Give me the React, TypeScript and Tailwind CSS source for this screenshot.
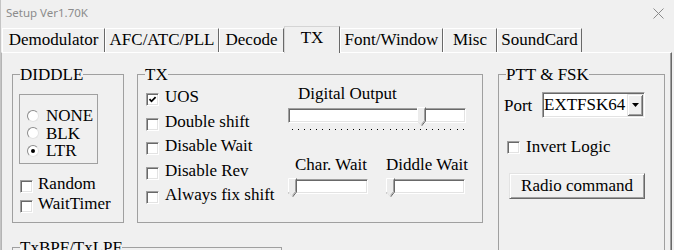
import React from 'react';

const CheckBox: React.FC<{ checked?: boolean; className?: string }> = ({ checked, className }) => (
  <span
    className={`relative block h-[13px] w-[13px] shrink-0 border border-b-white border-l-[#a0a0a0] border-r-white border-t-[#a0a0a0] bg-white shadow-[inset_1px_1px_0_#696969,inset_-1px_-1px_0_#e3e3e3] ${className ?? ''}`}
  >
    {checked && (
      <svg className="absolute left-[1px] top-[1px]" width="9" height="9" viewBox="0 0 9 9">
        <path d="M1.5 4.2 L3.5 6.3 L7.6 2.2" fill="none" stroke="#000" strokeWidth="1.8" />
      </svg>
    )}
  </span>
);

const Radio: React.FC<{ checked?: boolean }> = ({ checked }) => (
  <span className="flex h-[12px] w-[12px] shrink-0 items-center justify-center rounded-full border border-b-[#e3e3e3] border-l-[#8c8c8c] border-r-[#e3e3e3] border-t-[#8c8c8c] bg-white">
    {checked && <span className="block h-[4px] w-[4px] rounded-full bg-black" />}
  </span>
);

const Thumb: React.FC<{ className: string }> = ({ className }) => (
  <svg className={`absolute ${className}`} width="9" height="20" viewBox="0 0 9 20">
    <path d="M0.5 14 V0.5 H8.5 V14 L4.5 19 Z" fill="#ececec" />
    <path d="M0.5 14 V0.5 H8" fill="none" stroke="#ffffff" />
    <path d="M8.5 0.5 V14 L4.5 19" fill="none" stroke="#696969" />
    <path d="M7.5 1.5 V13.6 L4.5 17.4" fill="none" stroke="#a0a0a0" />
    <path d="M0.5 14 L4.3 18.6" fill="none" stroke="#e3e3e3" />
  </svg>
);

const Track: React.FC<{ className: string; children?: React.ReactNode }> = ({ className, children }) => (
  <div
    className={`relative h-[15px] border border-b-white border-l-[#a0a0a0] border-r-white border-t-[#a0a0a0] bg-white shadow-[inset_1px_1px_0_#696969,inset_-1px_-1px_0_#e3e3e3] ${className}`}
  >
    {children}
  </div>
);

const Group: React.FC<{ title: string; className: string; children?: React.ReactNode }> = ({ title, className, children }) => (
  <fieldset className={`shrink-0 border border-[#a0a0a0] ${className}`}>
    <legend className="ml-[7px] px-0 leading-[17px]">{title}</legend>
    {children}
  </fieldset>
);

const tabs = [
  { label: 'Demodulator', w: 'w-[103px]' },
  { label: 'AFC/ATC/PLL', w: 'w-[114px]' },
  { label: 'Decode', w: 'w-[65px]' },
  { label: 'TX', w: 'w-[56px]', active: true },
  { label: 'Font/Window', w: 'w-[103px]' },
  { label: 'Misc', w: 'w-[54px]' },
  { label: 'SoundCard', w: 'w-[85px]' },
];

const txChecks = [
  { label: 'UOS', checked: true },
  { label: 'Double shift' },
  { label: 'Disable Wait' },
  { label: 'Disable Rev' },
  { label: 'Always fix shift' },
];

export default function App() {
  return (
    <div className="flex h-[250px] w-[674px] flex-col overflow-hidden border-l border-[#c4c4c4] bg-[#f0f0f0] text-black">
      {/* title bar */}
      <div className="flex h-[26px] shrink-0 items-center justify-between pl-[5px] pr-[10px]">
        <span className="text-[11.5px] leading-[16px] text-[#8c8c8c] [font-family:'Noto_Sans',sans-serif]">Setup Ver1.70K</span>
        <svg width="11" height="11" viewBox="0 0 11 11">
          <path d="M0.5 0.5 L10.5 10.5 M10.5 0.5 L0.5 10.5" stroke="#8a8a8a" strokeWidth="1" />
        </svg>
      </div>

      {/* tabs */}
      <div className="flex h-[26px] shrink-0 items-end pl-[1px] text-[17px] [font-family:'Liberation_Serif',serif]">
        {tabs.map((t) =>
          t.active ? (
            <div
              key={t.label}
              className={`relative z-10 -mb-[1px] h-[27px] ${t.w} border-l border-t border-l-[#d4d4d4] border-t-[#d4d4d4] border-r border-r-[#696969] bg-[#f0f0f0] text-center leading-[22px]`}
            >
              {t.label}
            </div>
          ) : (
            <div
              key={t.label}
              className={`h-[24px] ${t.w} border-l border-t border-l-white border-t-white border-r border-r-[#696969] text-center leading-[22px]`}
            >
              {t.label}
            </div>
          ),
        )}
      </div>

      {/* tab page */}
      <div className="flex h-[198px] w-[671px] shrink-0 border-l border-t border-r border-l-[#b4b4b4] border-t-white border-r-[#696969] pl-[10px] pt-[13px] text-[17px] shadow-[inset_-1px_0_0_#a0a0a0] [font-family:'Liberation_Serif',serif]">
        <div className="flex flex-col">
          <div className="flex items-start">
            <Group title="DIDDLE" className="h-[157px] w-[112px]">
              <div className="ml-[6px] mt-[11px] h-[70px] w-[79px] border border-[#a0a0a0] pl-[7px] pt-[12px]">
                {[
                  { label: 'NONE' },
                  { label: 'BLK' },
                  { label: 'LTR', checked: true },
                ].map((r) => (
                  <div key={r.label} className="flex h-[17.5px] items-center leading-[17.5px]">
                    <Radio checked={r.checked} />
                    <span className="ml-[7px]">{r.label}</span>
                  </div>
                ))}
              </div>
              <div className="mt-[10px] pl-[7px]">
                {['Random', 'WaitTimer'].map((l) => (
                  <div key={l} className="flex h-[20px] items-start leading-[20px]">
                    <CheckBox className="mt-[6px]" />
                    <span className="ml-[5px]">{l}</span>
                  </div>
                ))}
              </div>
            </Group>

            <Group title="TX" className="ml-[13px] h-[157px] w-[346px]">
              <div className="flex">
                <div className="mt-[2px] w-[150px] pl-[8px]">
                  {txChecks.map((c) => (
                    <div key={c.label} className="flex h-[24.5px] items-start leading-[24.5px]">
                      <CheckBox checked={c.checked} className="mt-[8px]" />
                      <span className="ml-[6px] whitespace-nowrap">{c.label}</span>
                    </div>
                  ))}
                </div>
                <div className="flex flex-col">
                  <div className="pl-[10px] pt-[2px] leading-[17px]">Digital Output</div>
                  <Track className="mt-[6px] w-[178px]">
                    <Thumb className="left-[128px] top-[-2px]" />
                  </Track>
                  <div className="ml-[4px] mt-[6px] flex h-[1px] w-[172px] justify-between">
                    {Array.from({ length: 29 }).map((_, i) => (
                      <span key={i} className="block h-[1px] w-[1px] bg-black" />
                    ))}
                  </div>
                  <div className="mt-[24px] flex">
                    <div className="w-[98px]">
                      <div className="pl-[7px] pt-[2px] leading-[17px]">Char. Wait</div>
                      <Track className="mt-[6px] w-[80px]">
                        <Thumb className="left-[-1px] top-[-2px]" />
                      </Track>
                    </div>
                    <div>
                      <div className="whitespace-nowrap pt-[2px] leading-[17px]">Diddle Wait</div>
                      <Track className="mt-[6px] w-[79px]">
                        <Thumb className="left-[-1px] top-[-2px]" />
                      </Track>
                    </div>
                  </div>
                </div>
              </div>
            </Group>
          </div>

          <Group title="TxBPF/TxLPF" className="mt-[16px] h-[80px] w-[270px]" />
        </div>

        <Group title="PTT & FSK" className="ml-[15px] h-[200px] w-[167px]">
          <div className="flex items-start">
            <span className="ml-[5px] mt-[14px] w-[38px] leading-[17px]">Port</span>
            <div className="mt-[9px] flex h-[26px] w-[103px] border border-b-white border-l-[#a0a0a0] border-r-white border-t-[#a0a0a0] bg-white shadow-[inset_1px_1px_0_#696969,inset_-1px_-1px_0_#e3e3e3]">
              <span className="flex-1 pl-[1px] pt-[1px] leading-[22px]">EXTFSK64</span>
              <span className="mr-[1px] mt-[1px] flex h-[22px] w-[16px] items-center justify-center bg-[#f0f0f0] shadow-[inset_1px_1px_0_#e3e3e3,inset_-1px_-1px_0_#696969,inset_2px_2px_0_#ffffff,inset_-2px_-2px_0_#a0a0a0]">
                <svg width="7" height="4" viewBox="0 0 7 4">
                  <path d="M0 0 H7 L3.5 4 Z" fill="#000" />
                </svg>
              </span>
            </div>
          </div>
          <div className="ml-[8px] mt-[20px] flex h-[17px] items-start leading-[17px]">
            <CheckBox className="mt-[3px]" />
            <span className="ml-[6px]">Invert Logic</span>
          </div>
          <div className="ml-[10px] mt-[18px] flex h-[26px] w-[136px] items-center justify-center border border-b-[#696969] border-l-[#e3e3e3] border-r-[#696969] border-t-[#e3e3e3] pb-[2px] leading-[17px] shadow-[inset_1px_1px_0_#ffffff,inset_-1px_-1px_0_#a0a0a0]">
            Radio command
          </div>
        </Group>
      </div>
    </div>
  );
}
